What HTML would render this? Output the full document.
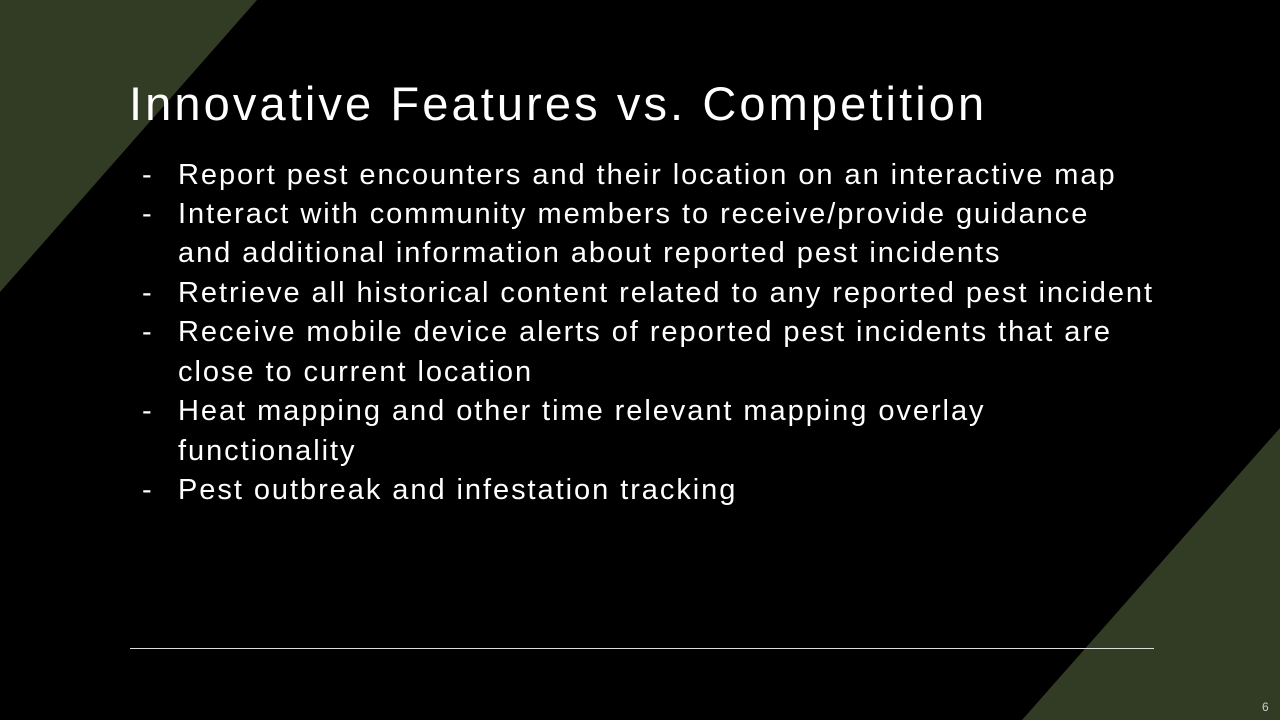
<!DOCTYPE html>
<html><head><style>
html,body{margin:0;padding:0}
body{width:1280px;height:720px;background:#000;position:relative;overflow:hidden;font-family:"Liberation Sans",sans-serif;color:#fff}
svg{position:absolute;left:0;top:0}
h1{position:absolute;left:129px;top:75px;margin:0;font-weight:normal;font-size:47px;line-height:58px;white-space:nowrap;letter-spacing:3.1px}
.l{position:absolute;left:178px;font-size:29px;line-height:39.5px;white-space:nowrap;letter-spacing:1.95px}
.d{position:absolute;left:142px;font-size:29px;line-height:39.5px}
.hr{position:absolute;left:130px;top:648px;width:1024px;height:1px;background:#ddd}
.pn{position:absolute;left:1262px;top:700px;font-size:12px;color:#ccc}
</style></head><body>
<svg width="1280" height="720"><polygon points="0,0 257,0 0,292" fill="#323b24"/><polygon points="1280,428 1280,720 1022,720" fill="#323b24"/></svg>
<h1>Innovative Features vs. Competition</h1>
<div class="d" style="top:156px">-</div><div class="l" style="top:156px">Report pest encounters and their location on an interactive map</div>
<div class="d" style="top:195px">-</div><div class="l" style="top:195px">Interact with community members to receive/provide guidance</div>
<div class="l" style="top:234px">and additional information about reported pest incidents</div>
<div class="d" style="top:274px">-</div><div class="l" style="top:274px">Retrieve all historical content related to any reported pest incident</div>
<div class="d" style="top:313px">-</div><div class="l" style="top:313px">Receive mobile device alerts of reported pest incidents that are</div>
<div class="l" style="top:353px">close to current location</div>
<div class="d" style="top:392px">-</div><div class="l" style="top:392px">Heat mapping and other time relevant mapping overlay</div>
<div class="l" style="top:432px">functionality</div>
<div class="d" style="top:471px">-</div><div class="l" style="top:471px">Pest outbreak and infestation tracking</div>
<div class="hr"></div>
<div class="pn">6</div>
</body></html>
